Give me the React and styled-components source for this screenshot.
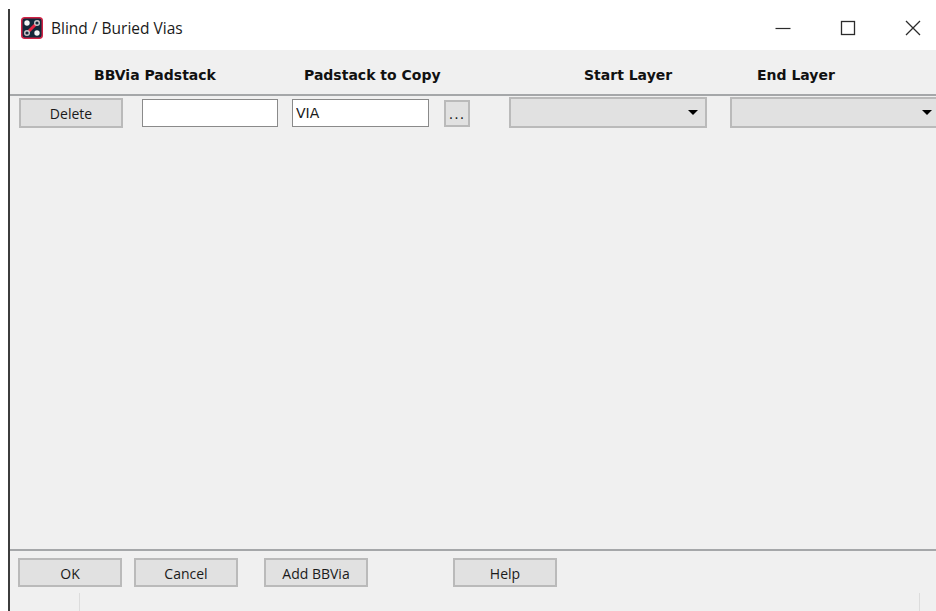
import React from 'react';
import styled, { createGlobalStyle } from 'styled-components';

const GlobalStyle = createGlobalStyle`
  html, body {
    margin: 0;
    padding: 0;
    background: #ffffff;
    overflow: hidden;
  }
`;

const Shell = styled.div`
  width: 936px;
  height: 611px;
  box-sizing: border-box;
  padding: 9px 0 0 8px;
  background: #ffffff;
  display: flex;
  font-family: "Open Sans", "Liberation Sans", sans-serif;
`;

const Dialog = styled.div`
  flex: 1;
  min-width: 0;
  display: flex;
  flex-direction: column;
  border-left: 2px solid #3c3c3c;
`;

const TitleBar = styled.div`
  height: 41px;
  flex: none;
  box-sizing: border-box;
  display: flex;
  align-items: center;
  padding: 0 15px 3px 11px;
  background: #ffffff;
`;

const TitleText = styled.span`
  margin-left: 8px;
  font-size: 15.5px;
  color: #1a1a1a;
`;

const WindowButtons = styled.div`
  margin-left: auto;
  display: flex;
  align-items: center;
  gap: 49px;
`;

const Body = styled.div`
  flex: 1;
  min-height: 0;
  display: flex;
  flex-direction: column;
  background: #f0f0f0;
`;

const HeaderRow = styled.div`
  height: 46px;
  flex: none;
  box-sizing: border-box;
  display: flex;
  align-items: center;
  padding-top: 6px;
  border-bottom: 2px solid #a5a7a9;
`;

const HeaderLabel = styled.div`
  flex: none;
  width: ${props => props.$width}px;
  margin-left: ${props => props.$offset}px;
  font-family: "DejaVu Sans", sans-serif;
  font-size: 14px;
  font-weight: 700;
  white-space: nowrap;
  color: #111111;
`;

const ViaRow = styled.div`
  flex: 1;
  min-height: 0;
  display: flex;
  align-items: flex-start;
  padding-top: 1px;
`;

const Button = styled.button`
  flex: none;
  width: ${props => props.$width || 104}px;
  height: ${props => props.$height || 30}px;
  margin: ${props => props.$top || 0}px 0 0 ${props => props.$offset}px;
  padding: 1px 0 0;
  box-sizing: border-box;
  background: #e1e1e1;
  border: 2px solid #bababa;
  font-family: "Open Sans", "Liberation Sans", sans-serif;
  font-size: 14px;
  color: #1a1a1a;
`;

const DotsButton = styled(Button)`
  font-family: "DejaVu Sans", sans-serif;
  font-size: 14px;
  letter-spacing: 1px;
`;

const TextField = styled.input`
  flex: none;
  width: ${props => props.$width}px;
  height: 28px;
  margin: 2px 0 0 ${props => props.$offset}px;
  padding: 0 3px;
  box-sizing: border-box;
  background: #ffffff;
  border: 1.5px solid #8a8a8a;
  border-radius: 0;
  outline: none;
  font-family: "DejaVu Sans", sans-serif;
  font-size: 14px;
  color: #1a1a1a;
`;

const Combo = styled.div`
  flex: none;
  width: ${props => props.$width}px;
  height: 31px;
  margin-left: ${props => props.$offset}px;
  box-sizing: border-box;
  display: flex;
  align-items: center;
  justify-content: flex-end;
  padding-right: ${props => props.$arrowGap}px;
  background: #e1e1e1;
  border: 2px solid #bababa;
  border-right-width: ${props => (props.$open ? 0 : 2)}px;
`;

const ComboArrow = styled.span`
  width: 0;
  height: 0;
  border-left: 5px solid transparent;
  border-right: 5px solid transparent;
  border-top: 5px solid #000000;
`;

const Footer = styled.div`
  height: 38px;
  flex: none;
  display: flex;
  align-items: flex-start;
  padding-top: 7px;
  box-sizing: border-box;
  border-top: 2px solid #a5a7a9;
`;

const StatusBar = styled.div`
  height: 24px;
  flex: none;
  display: flex;
  align-items: flex-end;
`;

const StatusDivider = styled.div`
  flex: none;
  width: 1px;
  height: 18px;
  margin-left: ${props => props.$offset}px;
  background: #dcdcdc;
`;

const AppIcon = () => (
  <svg width="22" height="22" viewBox="0 0 22 22">
    <rect x="0.75" y="0.75" width="20.5" height="20.5" rx="3" fill="#14283a" stroke="#d02245" strokeWidth="1.5" />
    <path d="M4 18 L18 4" stroke="#ea2440" strokeWidth="3" />
    <circle cx="6" cy="6" r="2.7" fill="#f6f6f6" />
    <circle cx="16" cy="6" r="2.3" fill="#14283a" stroke="#c8c8c8" strokeWidth="1.4" />
    <circle cx="6" cy="16" r="2.3" fill="#14283a" stroke="#c8c8c8" strokeWidth="1.4" />
    <circle cx="16" cy="16" r="2.7" fill="#f6f6f6" />
  </svg>
);

const MinimizeIcon = () => (
  <svg width="16" height="16" viewBox="0 0 16 16">
    <path d="M0.5 8.5 H15.5" stroke="#2b2b2b" strokeWidth="1.2" />
  </svg>
);

const MaximizeIcon = () => (
  <svg width="16" height="16" viewBox="0 0 16 16">
    <rect x="1.5" y="1.5" width="13" height="13" fill="none" stroke="#2b2b2b" strokeWidth="1.3" />
  </svg>
);

const CloseIcon = () => (
  <svg width="16" height="16" viewBox="0 0 16 16">
    <path d="M1 1 L15 15 M15 1 L1 15" stroke="#2b2b2b" strokeWidth="1.3" />
  </svg>
);

export default function App() {
  return (
    <>
      <GlobalStyle />
      <Shell>
        <Dialog>
          <TitleBar>
            <AppIcon />
            <TitleText>Blind / Buried Vias</TitleText>
            <WindowButtons>
              <MinimizeIcon />
              <MaximizeIcon />
              <CloseIcon />
            </WindowButtons>
          </TitleBar>
          <Body>
            <HeaderRow>
              <HeaderLabel $offset={84} $width={120}>BBVia Padstack</HeaderLabel>
              <HeaderLabel $offset={90} $width={140}>Padstack to Copy</HeaderLabel>
              <HeaderLabel $offset={140} $width={100}>Start Layer</HeaderLabel>
              <HeaderLabel $offset={73} $width={100}>End Layer</HeaderLabel>
            </HeaderRow>
            <ViaRow>
              <Button $offset={9} $top={1}>Delete</Button>
              <TextField $offset={19} $width={136} />
              <TextField $offset={14} $width={137} defaultValue="VIA" />
              <DotsButton $offset={15} $width={26} $height={27} $top={3}>...</DotsButton>
              <Combo $offset={39} $width={198} $arrowGap={7}><ComboArrow /></Combo>
              <Combo $offset={23} $width={206} $arrowGap={4} $open><ComboArrow /></Combo>
            </ViaRow>
            <Footer>
              <Button $offset={8} $height={29}>OK</Button>
              <Button $offset={12} $height={29}>Cancel</Button>
              <Button $offset={26} $height={29}>Add BBVia</Button>
              <Button $offset={85} $height={29}>Help</Button>
            </Footer>
            <StatusBar>
              <StatusDivider $offset={69} />
              <StatusDivider $offset={839} />
            </StatusBar>
          </Body>
        </Dialog>
      </Shell>
    </>
  );
}
